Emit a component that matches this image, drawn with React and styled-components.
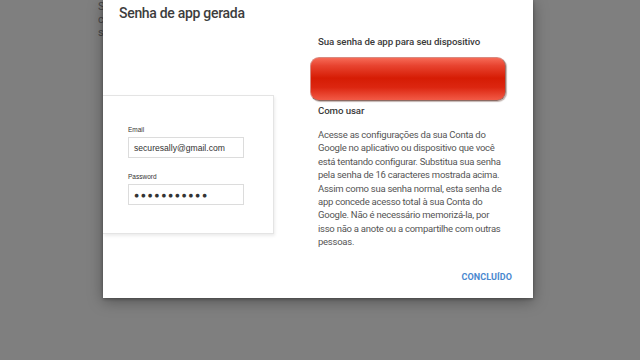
import React from 'react'
import styled, { createGlobalStyle } from 'styled-components'

const GlobalStyle = createGlobalStyle`
  html, body {
    margin: 0;
    padding: 0;
    background: #7f7f7f;
    font-family: Roboto, "Noto Sans", sans-serif;
  }
`

const Page = styled.div`
  position: relative;
  width: 640px;
  height: 360px;
  overflow: hidden;
  background: #7f7f7f;
`

const BehindText = styled.div`
  position: absolute;
  left: 98px;
  top: 0;
  width: 5px;
  overflow: hidden;
  font-size: 11px;
  line-height: 13px;
  color: #474747;
  white-space: nowrap;
`

const Dialog = styled.div`
  position: absolute;
  left: 103px;
  top: 0;
  width: 430px;
  height: 298px;
  background: #fff;
  box-shadow: 0 3px 14px rgba(0, 0, 0, 0.35), 0 1px 3px rgba(0, 0, 0, 0.3);
  overflow: hidden;
  display: flex;
  flex-direction: column;
`

const Title = styled.h2`
  margin: 0;
  padding: 4px 16px 0;
  font-size: 14px;
  line-height: 18px;
  font-weight: 500;
  letter-spacing: -0.3px;
  color: #3d3d3d;
`

const Body = styled.div`
  display: grid;
  grid-template-columns: 171px 1fr;
  column-gap: 44px;
  padding-right: 21px;
  flex: 1;
`

const LeftCol = styled.div`
  padding-top: 73px;
`

const Card = styled.div`
  height: 139px;
  background: #fff;
  border: 1px solid #e4e4e4;
  border-left: none;
  box-shadow: 1px 2px 3px rgba(0, 0, 0, 0.08);
  padding: 30px 0 0 25px;
  box-sizing: border-box;
  font-family: "Liberation Sans", Arial, sans-serif;
`

const FieldLabel = styled.div`
  font-size: 6.5px;
  line-height: 8px;
  color: #333;
  margin-bottom: 3px;
`

const Field = styled.div`
  width: 116px;
  height: 21px;
  box-sizing: border-box;
  border: 1px solid #dcdcdc;
  padding-left: 5px;
  display: flex;
  align-items: center;
  font-size: 8.6px;
  color: #333;
  letter-spacing: ${p => (p.$dots ? '1.6px' : '0')};
  margin-bottom: ${p => (p.$last ? '0' : '15px')};
`

const RightCol = styled.div`
  display: flex;
  flex-direction: column;
  padding-top: 13px;
`

const Heading = styled.div`
  font-size: 9.7px;
  line-height: 14px;
  font-weight: 500;
  letter-spacing: -0.1px;
  color: #3a3a3a;
`

const Secret = styled.div`
  margin: 8px 0 3px -8px;
  width: 196px;
  height: 44px;
  box-sizing: border-box;
  border-radius: 9px;
  border: 1px solid #d88a80;
  border-bottom-color: #8d6a62;
  border-right-color: #a07068;
  background: linear-gradient(
    to bottom,
    #f66a56 0%,
    #e84430 18%,
    #d61c04 48%,
    #dc2610 70%,
    #f25a46 100%
  );
  box-shadow: 1px 1px 1px rgba(80, 40, 30, 0.35);
`

const Paragraph = styled.p`
  margin: 10px 0 0;
  font-size: 9.5px;
  line-height: 13.4px;
  letter-spacing: -0.25px;
  color: #555;
  white-space: nowrap;
`

const Actions = styled.div`
  display: flex;
  justify-content: flex-end;
  margin-top: 23px;
`

const DoneButton = styled.button`
  background: none;
  border: none;
  padding: 0;
  font-family: Roboto, sans-serif;
  font-size: 9px;
  font-weight: 700;
  color: #4a88cf;
  letter-spacing: 0.1px;
  cursor: pointer;
`

export default function App() {
  return (
    <Page>
      <GlobalStyle />
      <BehindText>
        Sua conta<br />
        conta<br />
        senha
      </BehindText>
      <Dialog>
        <Title>Senha de app gerada</Title>
        <Body>
          <LeftCol>
            <Card>
              <FieldLabel>Email</FieldLabel>
              <Field>securesally@gmail.com</Field>
              <FieldLabel>Password</FieldLabel>
              <Field $dots $last>●●●●●●●●●●●</Field>
            </Card>
          </LeftCol>
          <RightCol>
            <Heading>Sua senha de app para seu dispositivo</Heading>
            <Secret />
            <Heading>Como usar</Heading>
            <Paragraph>
              Acesse as configurações da sua Conta do<br />
              Google no aplicativo ou dispositivo que você<br />
              está tentando configurar. Substitua sua senha<br />
              pela senha de 16 caracteres mostrada acima.<br />
              Assim como sua senha normal, esta senha de<br />
              app concede acesso total à sua Conta do<br />
              Google. Não é necessário memorizá-la, por<br />
              isso não a anote ou a compartilhe com outras<br />
              pessoas.
            </Paragraph>
            <Actions>
              <DoneButton>CONCLUÍDO</DoneButton>
            </Actions>
          </RightCol>
        </Body>
      </Dialog>
    </Page>
  )
}
